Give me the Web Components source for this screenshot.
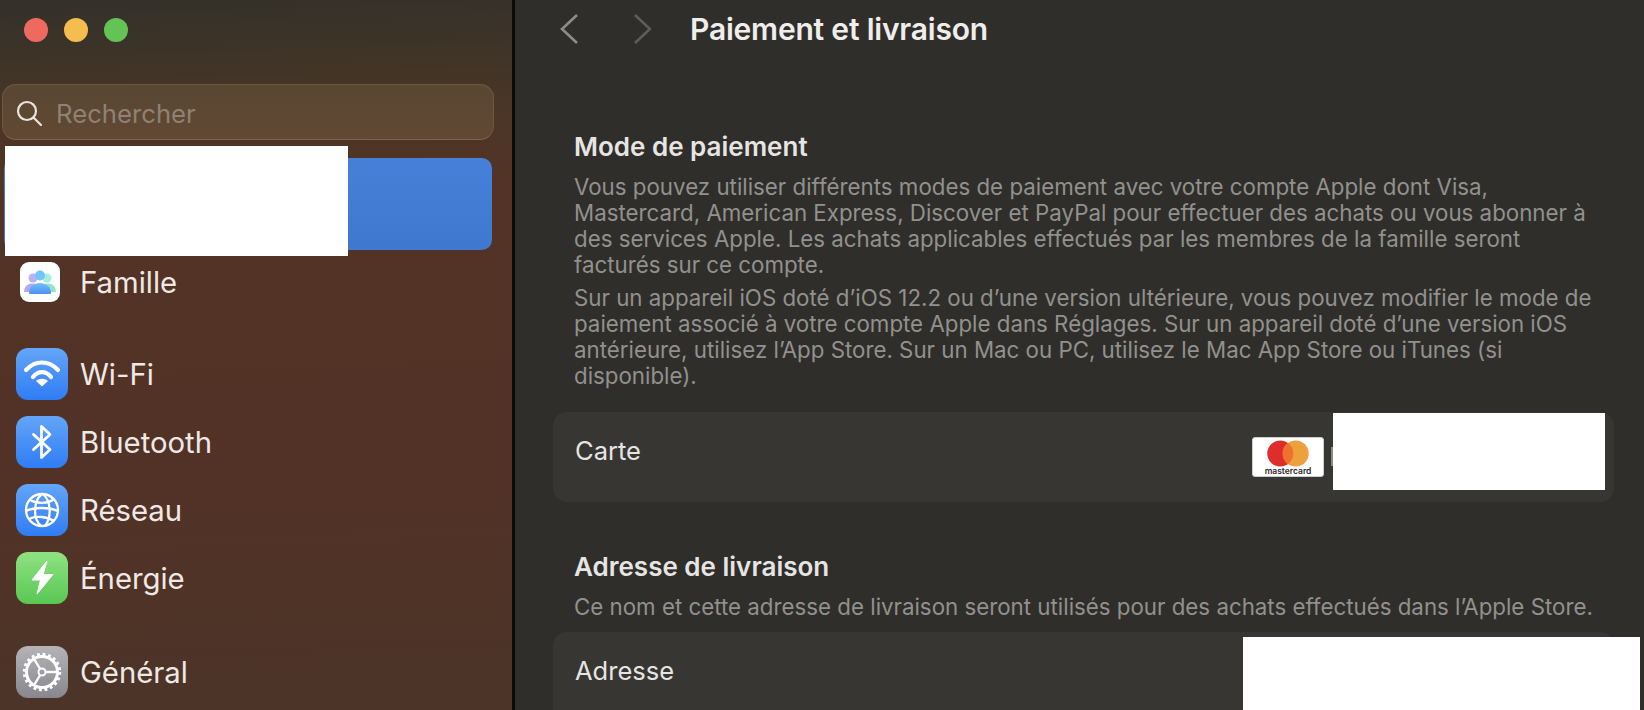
<!DOCTYPE html>
<html lang="fr">
<head>
<meta charset="utf-8">
<title>Paiement et livraison</title>
<style>
  html, body { margin: 0; height: 100%; overflow: hidden; background: #2f2e2a; }
  body { font-family: Inter, "Liberation Sans", sans-serif; }
</style>
</head>
<body>
<settings-window>
  <settings-sidebar slot="sidebar">
    <search-field placeholder="Rechercher"></search-field>
    <nav-item icon="none" selected></nav-item>
    <nav-item label="Famille" icon="family"></nav-item>
    <nav-item label="Wi-Fi" icon="wifi" group></nav-item>
    <nav-item label="Bluetooth" icon="bluetooth"></nav-item>
    <nav-item label="Réseau" icon="globe"></nav-item>
    <nav-item label="Énergie" icon="bolt"></nav-item>
    <nav-item label="Général" icon="gear" group></nav-item>
  </settings-sidebar>
  <settings-main slot="main" heading="Paiement et livraison">
    <settings-section heading="Mode de paiement">
      <p>Vous pouvez utiliser différents modes de paiement avec votre compte Apple dont Visa,<br>Mastercard, American Express, Discover et PayPal pour effectuer des achats ou vous abonner à<br>des services Apple. Les achats applicables effectués par les membres de la famille seront<br>facturés sur ce compte.</p>
      <p>Sur un appareil iOS doté d’iOS 12.2 ou d’une version ultérieure, vous pouvez modifier le mode de<br>paiement associé à votre compte Apple dans Réglages. Sur un appareil doté d’une version iOS<br>antérieure, utilisez l’App Store. Sur un Mac ou PC, utilisez le Mac App Store ou iTunes (si<br>disponible).</p>
      <settings-row slot="row" label="Carte" kind="card"></settings-row>
    </settings-section>
    <settings-section heading="Adresse de livraison" class="second">
      <p>Ce nom et cette adresse de livraison seront utilisés pour des achats effectués dans l’Apple Store.</p>
      <settings-row slot="row" label="Adresse" kind="address"></settings-row>
    </settings-section>
  </settings-main>
</settings-window>

<script>
const ICONS = {
  none: '',
  family: `<svg viewBox="0 0 40 40" width="40" height="40">
    <defs>
      <linearGradient id="fb" x1="0" y1="0" x2="0" y2="1"><stop offset="0" stop-color="#6fc2f8"/><stop offset="1" stop-color="#4e8ff5"/></linearGradient>
    </defs>
    <rect width="40" height="40" rx="9" fill="#fff"/>
    <circle cx="13" cy="16" r="4.5" fill="#b9b2f3"/>
    <circle cx="27" cy="16" r="4.5" fill="#a3eed6"/>
    <path d="M4 30c0-6 4-8.500 9-8.500s7 3 7 8.500z" fill="#b3a9f1"/>
    <path d="M36 30c0-6-4-8.500-9-8.500s-7 3-7 8.500z" fill="#93e2c9"/>
    <circle cx="20" cy="13.500" r="5" fill="#74c4f8"/>
    <path d="M9 31c0-6 5-10 11-10s11 4 11 10c0 .6-.5 1-1 1H10c-.5 0-1-.4-1-1z" fill="url(#fb)"/>
  </svg>`,
  wifi: `<svg viewBox="0 0 52 52" width="52" height="52" fill="none">
    <defs><linearGradient id="bw" x1="0" y1="0" x2="0" y2="1"><stop offset="0" stop-color="#64a5f9"/><stop offset="1" stop-color="#2f7df5"/></linearGradient></defs>
    <rect width="52" height="52" rx="12" fill="url(#bw)"/>
    <g stroke="#fff" stroke-width="4.200" stroke-linecap="round">
      <path d="M10 22C19 12 33 12 42 22"/>
      <path d="M17 29C22 22.500 30 22.500 35 29"/>
    </g>
    <path d="M26 38l-5.500-5c3.200-2.300 7.800-2.300 11 0z" fill="#fff" stroke="#fff" stroke-linejoin="round"/>
  </svg>`,
  bluetooth: `<svg viewBox="0 0 52 52" width="52" height="52" fill="none">
    <defs><linearGradient id="bb" x1="0" y1="0" x2="0" y2="1"><stop offset="0" stop-color="#64a5f9"/><stop offset="1" stop-color="#2f7df5"/></linearGradient></defs>
    <rect width="52" height="52" rx="12" fill="url(#bb)"/>
    <path d="M17.500 18.500L34 33.500 25.500 41.500V10.500L34 18.500 17.500 33.500" stroke="#fff" stroke-width="2.800" stroke-linecap="round" stroke-linejoin="round"/>
  </svg>`,
  globe: `<svg viewBox="0 0 52 52" width="52" height="52" fill="none">
    <defs><linearGradient id="bg" x1="0" y1="0" x2="0" y2="1"><stop offset="0" stop-color="#64a5f9"/><stop offset="1" stop-color="#2f7df5"/></linearGradient></defs>
    <rect width="52" height="52" rx="12" fill="url(#bg)"/>
    <g stroke="#fff" stroke-width="2.300">
      <circle cx="26" cy="26" r="16"/>
      <path d="M26 10C18 16 16 34 25 42"/>
      <path d="M27 10C35 17 36 33 29 42"/>
      <path d="M14 16C21 20 32 20 38 15"/>
      <path d="M10 27C18 23 33 23 42 27"/>
      <path d="M13 35C20 31 32 33 38 37"/>
    </g>
  </svg>`,
  bolt: `<svg viewBox="0 0 52 52" width="52" height="52">
    <defs><linearGradient id="bl" x1="0" y1="0" x2="0" y2="1"><stop offset="0" stop-color="#8fe283"/><stop offset="1" stop-color="#59c754"/></linearGradient></defs>
    <rect width="52" height="52" rx="12" fill="url(#bl)"/>
    <path d="M31 9L16 28H24.500L21 42 37 22.500H27z" fill="#fff" stroke="#fff" stroke-width="1" stroke-linejoin="round"/>
  </svg>`,
  gear: `<svg viewBox="0 0 52 52" width="52" height="52" fill="none">
    <defs><linearGradient id="bgr" x1="0" y1="0" x2="0" y2="1"><stop offset="0" stop-color="#b4b3b8"/><stop offset="1" stop-color="#88878d"/></linearGradient></defs>
    <rect width="52" height="52" rx="12" fill="url(#bgr)"/>
    <circle cx="26" cy="26" r="15.500" stroke="#fff" stroke-width="3"/>
    <circle cx="26" cy="26" r="17.500" stroke="#fff" stroke-width="3.500" stroke-dasharray="2.750 2.750"/>
    <circle cx="26" cy="26" r="3.500" stroke="#fff" stroke-width="2"/>
    <path d="M29.500 26H41M24.200 23L18 12.800M24.200 29L18 39.200" stroke="#fff" stroke-width="2.400"/>
  </svg>`
};

function define(name, css, html) {
  customElements.define(name, class extends HTMLElement {
    constructor() {
      super();
      this.attachShadow({ mode: 'open' });
      const attr = key => this.getAttribute(key) || '';
      this.shadowRoot.innerHTML = `<style>${css}</style>` + html(attr);
    }
  });
}

define('settings-window', `
  :host { display: flex; width: 1644px; height: 710px; overflow: hidden; }
  .divider { flex: none; width: 3px; background: #0b0a09; }
`, () => `
  <slot name="sidebar"></slot>
  <div class="divider"></div>
  <slot name="main"></slot>
`);

define('settings-sidebar', `
  :host {
    display: block; flex: none; width: 512px; height: 710px; box-sizing: border-box;
    padding: 18px 18px 0 2px; overflow: hidden; position: relative;
    background: linear-gradient(178deg, #33312b 0, #3f3427 70px, #4c3626 130px, #533325 210px, #523226 500px, #4c3428 710px);
    color: #efe9e6;
  }
  .lights { display: flex; gap: 16px; padding-left: 22px; margin-bottom: 42px; }
  .lights i { width: 24px; height: 24px; border-radius: 50%; }
  .redact { position: absolute; left: 5px; top: 146px; width: 343px; height: 110px; background: #fff; }
`, () => `
  <div class="lights">
    <i style="background:#ee6a5f"></i><i style="background:#f5bd4f"></i><i style="background:#61c454"></i>
  </div>
  <slot></slot>
  <div class="redact"></div>
`);

define('search-field', `
  :host {
    display: flex; align-items: center; gap: 14px; box-sizing: border-box;
    width: 492px; height: 56px; padding: 2px 0 0 13px; border-radius: 14px;
    background: linear-gradient(180deg, #574733, #624833);
    border: 1px solid #70583f; border-bottom-color: #7d6450;
    font-size: 25.700px; color: #8f8174;
  }
  svg { flex: none; }
`, attr => `
  <svg viewBox="0 0 26 26" width="26" height="26" fill="none" stroke="#e9e4df" stroke-width="2.200" stroke-linecap="round">
    <circle cx="11" cy="11" r="9"/><path d="M17.500 17.500L25 25"/>
  </svg>
  <span>${attr('placeholder')}</span>
`);

define('nav-item', `
  :host {
    display: flex; align-items: center; box-sizing: border-box;
    height: 68px; margin-left: 14px; font-size: 29.300px;
  }
  :host([group]) { margin-top: 24px; }
  :host([icon=gear]) { margin-top: 26px; }
  :host([icon=family]) { margin-top: -2px; }
  :host([selected]) {
    height: 92px; width: 488px; margin: 18px 0 0 2px; border-radius: 10px;
    background: linear-gradient(180deg, #4680d8, #3f78cf);
  }
  .icon { flex: none; width: 52px; display: flex; justify-content: center; }
  :host([icon=family]) svg { margin-right: 4px; }
  .label { margin-left: 12px; }
`, attr => attr('icon') === 'none' ? '' : `
  <div class="icon">${ICONS[attr('icon')]}</div>
  <span class="label">${attr('label')}</span>
`);

define('settings-main', `
  :host { display: block; flex: 1; min-width: 0; height: 710px; box-sizing: border-box; background: #2f2e2a; overflow: hidden; padding-left: 38px; color: #efeeec; }
  header { display: flex; align-items: center; height: 58px; }
  svg { flex: none; }
  .next { margin-left: 54px; }
  h1 { margin: 0 0 0 39px; font-size: 30px; font-weight: 600; letter-spacing: -.2px; }
  .body { padding-top: 74px; }
`, attr => `
  <header>
    <svg class="prev" viewBox="0 0 26 30" width="26" height="30" fill="none" stroke="#8d8c88" stroke-width="2.600"><path d="M24 1L9 15l15 14"/></svg>
    <svg class="next" viewBox="0 0 18 30" width="18" height="30" fill="none" stroke="#5e5d59" stroke-width="2.600"><path d="M2 1l15 14L2 29"/></svg>
    <h1>${attr('heading')}</h1>
  </header>
  <div class="body"><slot></slot></div>
`);

define('settings-section', `
  :host { display: block; }
  :host(.second) { margin-top: 50px; }
  h2 { margin: 0 0 0 21px; font-size: 26px; line-height: 30px; font-weight: 600; color: #e6e5e3; }
  .text { margin: 12px 0 23px 21px; font-size: 22.300px; line-height: 26px; color: #92918d; white-space: nowrap; }
  :host(.second) .text { margin-bottom: 12px; }
  ::slotted(p) { margin: 0 0 7px; }
`, attr => `
  <h2>${attr('heading')}</h2>
  <div class="text"><slot></slot></div>
  <slot name="row"></slot>
`);

define('settings-row', `
  :host {
    display: flex; align-items: center; justify-content: space-between; position: relative;
    box-sizing: border-box; width: 1061px; height: 90px; padding: 0 0 14px 22px;
    border-radius: 14px; background: #373632; font-size: 25.500px; color: #e6e5e3;
  }
  .redact { position: absolute; background: #fff; }
  .card { left: 780px; top: 1px; width: 272px; height: 77px; }
  .address { left: 690px; top: 5px; width: 397px; height: 85px; }
  .sliver { position: absolute; left: 778px; top: 35px; width: 2px; height: 19px; background: #8a8985; }
  .brand { position: absolute; left: 699px; top: 25px; width: 72px; height: 40px; box-sizing: border-box; background: #fff; border-radius: 3px; border: 1px solid #cfcfcf; text-align: center; }
  .brand svg { display: block; margin: 2px auto 0; }
  .brand span { display: block; font-size: 8.500px; line-height: 8px; font-weight: 600; color: #2b2b2b; }
`, attr => `
  <span>${attr('label')}</span>
  ${attr('kind') === 'card' ? `<div class="brand">
    <svg viewBox="0 0 44 28" width="44" height="27">
      <circle cx="14" cy="14" r="13.500" fill="#df2d2b"/>
      <circle cx="30" cy="14" r="13.500" fill="#eda13c"/>
      <path d="M22 3.100a13.500 13.500 0 0 1 0 21.800a13.500 13.500 0 0 1 0-21.800z" fill="#f0702f"/>
    </svg>
    <span>mastercard</span>
  </div><div class="sliver"></div>` : ''}
  <div class="redact ${attr('kind')}"></div>
`);
</script>
</body>
</html>
